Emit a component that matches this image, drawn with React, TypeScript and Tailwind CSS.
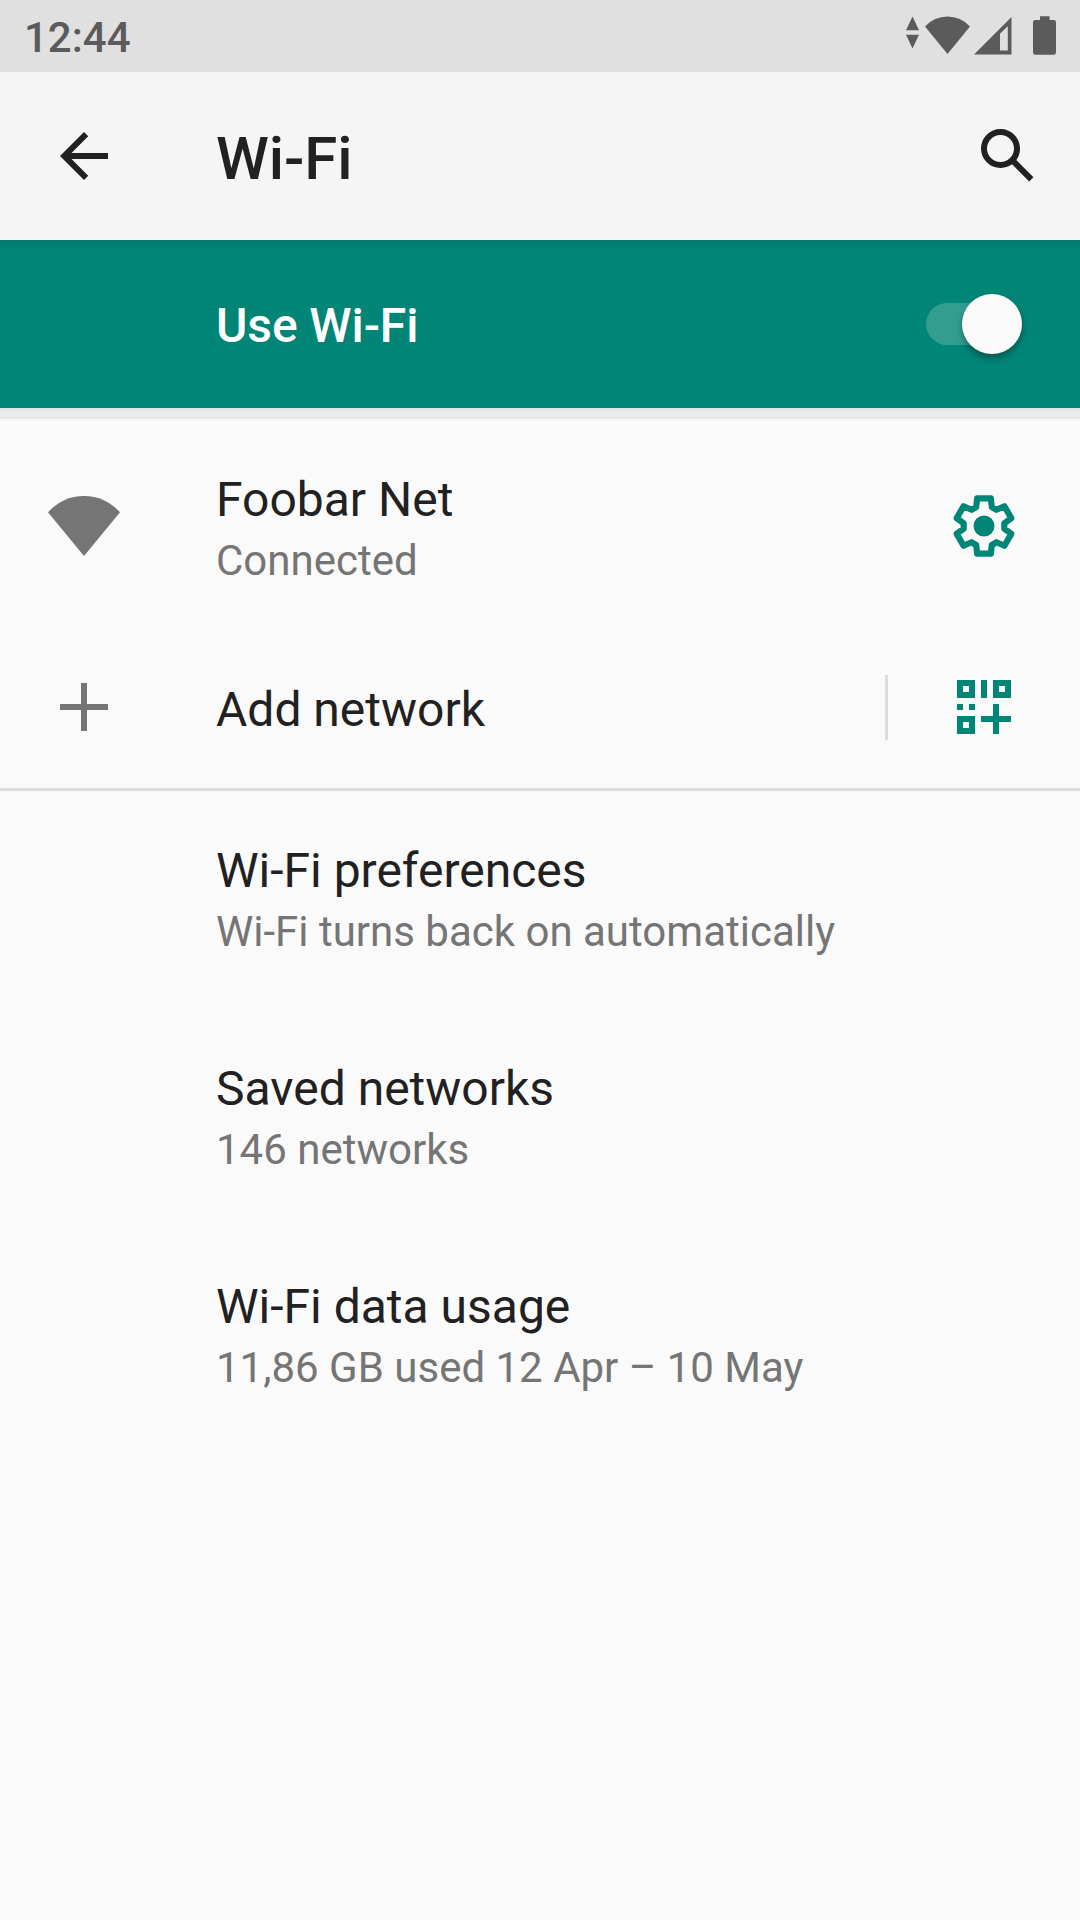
import type { ReactNode } from "react";

const GEAR_POINTS = Array.from({ length: 6 }, (_, k) => k * 60 - 90)
  .flatMap((a) => [
    [a - 14, 28.4],
    [a + 14, 28.4],
    [a + 30 - 7.6, 20.5],
    [a + 30 + 7.6, 20.5],
  ])
  .map(([deg, r]) => {
    const t = (deg * Math.PI) / 180;
    return `${(36 + r * Math.cos(t)).toFixed(2)},${(36 + r * Math.sin(t)).toFixed(2)}`;
  })
  .join(" ");

function GearIcon() {
  return (
    <svg className="size-[72px]" viewBox="0 0 72 72" fill="none">
      <polygon points={GEAR_POINTS} stroke="#008577" strokeWidth="6.2" strokeLinejoin="round" />
      <circle cx="36" cy="36" r="10.5" fill="#008577" />
    </svg>
  );
}

function QrAddIcon() {
  return (
    <svg className="size-[54px]" viewBox="0 0 9 9" fill="#008577" fillRule="evenodd" shapeRendering="crispEdges">
      <path d="M0 0h3v3H0zM1 1v1h1V1zM4 0h1v3H4zM6 0h3v3H6zM7 1v1h1V1zM0 4h1v1H0zM2 4h1v1H2zM0 6h3v3H0zM1 7v1h1V7z" />
      <path d="M6 4h1v2h2v1H7v2H6V7H4V6h2z" />
    </svg>
  );
}

function StatusBar() {
  return (
    <div className="flex h-[72px] items-start justify-between bg-[#e0e0e0] pl-[24px] text-[#5b5b5b]">
      <span className="pt-[13px] text-[42px] leading-[50px] font-medium">12:44</span>
      <svg className="h-[72px] w-[180px]" viewBox="900 0 180 72" fill="currentColor">
        <path d="M912.5 16.5L919 30.2H906zM912.5 48.5L919 34.8H906z" />
        <path d="M947.5 54L925 26.6A30 30 0 0 1 970 26.6z" />
        <path fillRule="evenodd" d="M974 54.5L1011.5 17V54.5zM1000 33.8V50.6H1007.8V26.2z" />
        <path d="M1040 16.2h9.6V20h4.2a2.2 2.2 0 0 1 2.2 2.2V52.5a2.2 2.2 0 0 1-2.2 2.2h-18.6a2.2 2.2 0 0 1-2.2-2.2V22.2a2.2 2.2 0 0 1 2.2-2.2h4.8z" />
      </svg>
    </div>
  );
}

function AppBar() {
  return (
    <header className="flex h-[168px] items-center bg-[#f5f5f5] pr-[36px] pl-[48px] text-[#212121]">
      <svg className="size-[72px]" viewBox="0 0 24 24" fill="currentColor">
        <path d="M20 11H7.83l5.59-5.59L12 4l-8 8 8 8 1.41-1.41L7.83 13H20v-2z" />
      </svg>
      <h1 className="ml-[96px] flex-1 pt-[5px] text-[60px] leading-[72px] font-medium tracking-[-0.1px]">Wi-Fi</h1>
      <svg className="size-[72px]" viewBox="0 0 72 72" fill="none" stroke="currentColor" strokeWidth="6">
        <circle cx="28.5" cy="28.5" r="16.5" />
        <path d="M40 40L59.3 59.3" />
      </svg>
    </header>
  );
}

function WifiSwitch() {
  return (
    <div className="flex h-[168px] items-center justify-between bg-[#008577] bg-linear-to-b from-[#007a6d] from-0% to-[#008577] to-[10px] pr-[58px] pl-[216px]">
      <span className="pt-[3px] text-[48px] leading-[56px] font-medium tracking-[-0.1px] text-white">Use Wi-Fi</span>
      <span className="flex h-[42px] w-[96px] items-center justify-end rounded-full bg-white/20">
        <span className="size-[60px] shrink-0 rounded-full bg-[#fafafa] shadow-[0_4px_7px_rgba(0,0,0,0.35)]" />
      </span>
    </div>
  );
}

type RowProps = { title: string; summary?: string; icon?: ReactNode; action?: ReactNode };

function Row({ title, summary, icon, action }: RowProps) {
  return (
    <div className={summary ? "flex h-[218px] items-center" : "flex h-[144px] items-center"}>
      <div className="flex w-[168px] justify-center">{icon}</div>
      <div className={summary ? "ml-[48px] flex-1 pt-[5px]" : "ml-[48px] flex-1 pt-[6px]"}>
        <div className="text-[48px] leading-[64px] text-[#212121]">{title}</div>
        {summary && <div className="text-[42px] leading-[57px] text-[#757575]">{summary}</div>}
      </div>
      {action}
    </div>
  );
}

export default function App() {
  return (
    <div className="h-[1920px] w-[1080px] overflow-hidden bg-[#fafafa] font-['Roboto',sans-serif]">
      <StatusBar />
      <AppBar />
      <WifiSwitch />
      <div className="h-[9px] bg-linear-to-b from-[#e1e1e1] to-[#ececec] to-40%" />
      <main>
        <div className="-mb-[3px] h-[3px] bg-linear-to-b from-[#dcdcdc] to-[#fafafa]" />
        <Row
          title="Foobar Net"
          summary="Connected"
          icon={
            <svg className="h-[60px] w-[72px]" viewBox="0 0 72 60" fill="#757575">
              <path d="M36 60L0 16.3A48 48 0 0 1 72 16.3z" />
            </svg>
          }
          action={
            <div className="flex w-[192px] justify-center">
              <GearIcon />
            </div>
          }
        />
        <Row
          title="Add network"
          icon={
            <svg className="size-[48px]" viewBox="0 0 48 48" fill="#757575">
              <path d="M21 0h6v21h21v6H27v21h-6V27H0v-6h21z" />
            </svg>
          }
          action={
            <div className="flex w-[195px] items-center">
              <div className="h-[65px] w-[3px] bg-[#dadadf]" />
              <div className="flex flex-1 justify-center">
                <QrAddIcon />
              </div>
            </div>
          }
        />
        <div className="mt-[9px] -mb-[3px] h-[3px] bg-[#dadadf]" />
        <Row title="Wi-Fi preferences" summary="Wi-Fi turns back on automatically" />
        <Row title="Saved networks" summary="146 networks" />
        <Row title="Wi-Fi data usage" summary="11,86 GB used 12 Apr – 10 May" />
      </main>
    </div>
  );
}
